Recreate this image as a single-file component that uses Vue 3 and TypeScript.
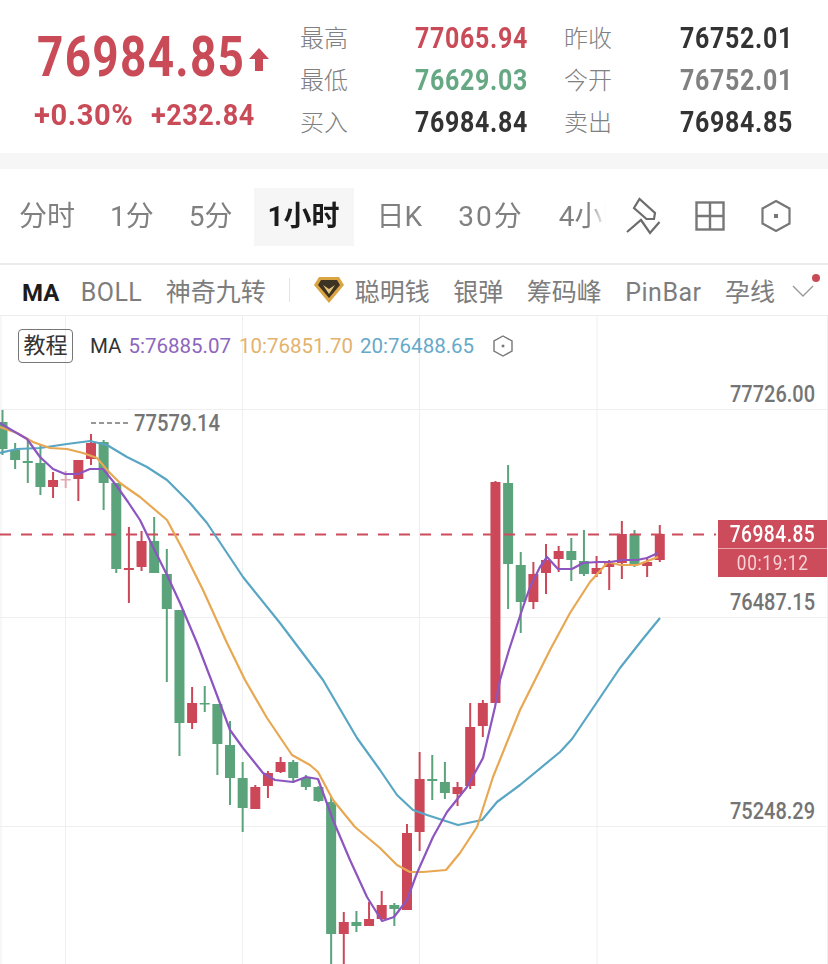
<template>
  <div class="page">
    <header class="quote">
      <div class="quote-main">
        <div class="price-line">
          <span class="price num">76984.85</span>
          <svg class="up-arrow" width="22" height="24" viewBox="0 0 22 24">
            <polygon points="11,1 21,12 15,12 15,24 7,24 7,12 1,12" fill="#c94b58" />
          </svg>
        </div>
        <div class="change-line num">
          <span class="pct">+0.30%</span>
          <span class="amount">+232.84</span>
        </div>
      </div>
      <div class="stats">
        <template v-for="row in stats" :key="row.label">
          <span class="stat-label">{{ row.label }}</span>
          <span class="stat-value num" :class="row.tone">{{ row.value }}</span>
        </template>
      </div>
    </header>

    <div class="band"></div>

    <nav class="periods">
      <div class="period-list">
        <span
          v-for="p in periods"
          :key="p"
          class="period"
          :class="{ active: p === '1小时' }"
        >{{ p }}</span>
      </div>
      <div class="tools">
        <svg width="36" height="38" viewBox="0 0 36 38" fill="none" stroke="#6c6c6c" stroke-width="2.2">
          <path d="M8 11 L13.5 2 L29 16 L28 22 L20.5 22 Z" />
          <path d="M1 35 L15 23 L24 36 L33.5 25" />
        </svg>
        <svg width="30" height="30" viewBox="0 0 30 30" fill="none" stroke="#777" stroke-width="2.4">
          <rect x="1.5" y="1.5" width="27" height="27" />
          <path d="M15 1.5 V28.5 M1.5 15 H28.5" />
        </svg>
        <svg class="tool-hex" width="30" height="34" viewBox="0 0 30 34" fill="none" stroke="#777" stroke-width="2.2">
          <polygon points="15,2 28.5,9.5 28.5,24.5 15,32 1.5,24.5 1.5,9.5" />
          <rect x="13" y="15" width="4" height="4" fill="#777" stroke="none" />
        </svg>
      </div>
    </nav>

    <div class="indicators">
      <span class="ind active">MA</span>
      <span class="ind boll">BOLL</span>
      <span class="ind">神奇九转</span>
      <span class="divider"></span>
      <svg class="gem" width="30" height="26" viewBox="0 0 30 26">
        <polygon points="5,0 25,0 30,8 15,26 0,8" fill="#d9a441" />
        <polygon points="7,3 23,3 26,8 15,21 4,8" fill="#3d3323" />
        <polygon points="9,8 15,12 21,8 15,17" fill="#e8c37a" />
      </svg>
      <span class="ind">聪明钱</span>
      <span class="ind">银弹</span>
      <span class="ind">筹码峰</span>
      <span class="ind pinbar">PinBar</span>
      <span class="ind">孕线</span>
      <span class="more">
        <svg width="22" height="14" viewBox="0 0 22 14" fill="none" stroke="#999" stroke-width="1.4">
          <path d="M1 2 L11 12 L21 2" />
        </svg>
        <i class="dot"></i>
      </span>
    </div>

    <section class="chart">
      <svg class="plot" width="828" height="648" viewBox="0 316 828 648">
        <g stroke="#efefef" stroke-width="1">
          <line v-for="x in gridX" :key="'v' + x" :x1="x" :x2="x" y1="316" y2="964" />
          <line v-for="y in gridY" :key="'h' + y" x1="0" x2="827" :y1="y" :y2="y" />
        </g>

        <g v-for="(c, i) in candles" :key="i" :fill="colors[c[4]]">
          <rect :x="xOf(i) - 1" :y="c[2]" width="2" :height="c[3] - c[2]" />
          <rect :x="xOf(i) - 5" :y="c[0]" width="10" :height="c[1] - c[0]" />
        </g>

        <line x1="0" x2="716" y1="534.5" y2="534.5" stroke="#cd4c5b" stroke-width="2" stroke-dasharray="11 10" />

        <polyline :points="ma20" fill="none" stroke="#58a6c4" stroke-width="2.2" stroke-linejoin="round" />
        <polyline :points="ma10" fill="none" stroke="#e8a853" stroke-width="2.2" stroke-linejoin="round" />
        <polyline :points="ma5" fill="none" stroke="#8d55c0" stroke-width="2.2" stroke-linejoin="round" />

        <line x1="91" x2="129" y1="423" y2="423" stroke="#777" stroke-width="1.6" stroke-dasharray="5 3" />
        <text x="134" y="431" class="axis" textLength="86" lengthAdjust="spacingAndGlyphs">77579.14</text>
        <text x="730" y="402" class="axis" textLength="85" lengthAdjust="spacingAndGlyphs">77726.00</text>
        <text x="730" y="610" class="axis" textLength="85" lengthAdjust="spacingAndGlyphs">76487.15</text>
        <text x="730" y="819" class="axis" textLength="85" lengthAdjust="spacingAndGlyphs">75248.29</text>
      </svg>

      <div class="legend">
        <span class="guide">教程</span>
        <span class="legend-ma">MA</span>
        <span class="m5">5:76885.07</span>
        <span class="m10">10:76851.70</span>
        <span class="m20">20:76488.65</span>
        <svg width="20" height="22" viewBox="0 0 20 22" fill="none" stroke="#777" stroke-width="1.4">
          <polygon points="10,1 19,6 19,16 10,21 1,16 1,6" />
          <rect x="8.7" y="9.7" width="2.6" height="2.6" fill="#777" stroke="none" />
        </svg>
      </div>

      <div class="tag num">
        <div class="tag-row top"><span class="tag-price">76984.85</span></div>
        <div class="tag-row"><span class="tag-time">00:19:12</span></div>
      </div>
    </section>
  </div>
</template>

<script setup lang="ts">
type Tone = 'r' | 'g' | 'p'
// bodyTop, bodyBottom, wickTop, wickBottom, colour
type Candle = [number, number, number, number, Tone]

const stats = [
  { label: '最高', value: '77065.94', tone: 'red' },
  { label: '昨收', value: '76752.01', tone: 'dark' },
  { label: '最低', value: '76629.03', tone: 'green' },
  { label: '今开', value: '76752.01', tone: 'grey' },
  { label: '买入', value: '76984.84', tone: 'dark' },
  { label: '卖出', value: '76984.85', tone: 'dark' }
]

const periods = ['分时', '1分', '5分', '1小时', '日K', '30分', '4小时']

const colors: Record<Tone, string> = { r: '#cc4858', g: '#5aa37b', p: '#e2a9b0' }

const gridX = [1, 65.5, 242.5, 419.5, 597, 827.5]
const gridY = [409.5, 617.5, 826.5]

const candles: Candle[] = [
  [422, 449, 410, 455, 'g'],
  [450, 460, 443, 469, 'g'],
  [461, 463, 439, 483, 'g'],
  [463, 487, 444, 495, 'g'],
  [480, 487, 472, 498, 'r'],
  [479, 480.5, 471, 488, 'p'],
  [460, 479, 460, 501, 'r'],
  [443, 459, 434, 465, 'r'],
  [442, 483, 440, 510, 'g'],
  [483, 569, 483, 573, 'g'],
  [568, 570, 527, 603, 'r'],
  [541, 567, 531, 571, 'r'],
  [541, 573, 517, 573, 'g'],
  [574, 609, 549, 682, 'g'],
  [610, 723, 610, 756, 'g'],
  [703, 723, 687, 729, 'r'],
  [703, 704.5, 686, 712, 'g'],
  [704, 744, 704, 775, 'g'],
  [745, 778, 721, 805, 'g'],
  [778, 808, 762, 832, 'g'],
  [787, 809, 785, 809, 'r'],
  [773, 786, 771, 798, 'r'],
  [762, 772, 757, 773, 'r'],
  [762, 778, 760, 783, 'g'],
  [778, 787, 775, 790, 'g'],
  [787, 801, 786, 802, 'g'],
  [802, 934, 797, 970, 'g'],
  [922, 934, 912, 970, 'r'],
  [922, 926, 911, 932, 'g'],
  [919, 926, 902, 926, 'r'],
  [905, 919, 891, 920, 'r'],
  [905, 909, 903, 926, 'g'],
  [833, 910, 824, 910, 'r'],
  [779, 832, 752, 851, 'r'],
  [779, 781, 755, 800, 'g'],
  [782, 793, 762, 799, 'g'],
  [787, 794, 782, 806, 'r'],
  [727, 786, 703, 789, 'r'],
  [703, 726, 700, 737, 'r'],
  [482, 703, 481, 703, 'r'],
  [483, 564, 465, 609, 'g'],
  [565, 602, 552, 633, 'g'],
  [574, 602, 562, 609, 'r'],
  [560, 573, 544, 594, 'r'],
  [551, 559, 546, 572, 'r'],
  [551, 560, 538, 581, 'g'],
  [561, 574, 530, 576, 'g'],
  [568, 574, 556, 577, 'r'],
  [563, 567, 560, 590, 'r'],
  [534, 563, 521, 579, 'r'],
  [534, 565, 530, 567, 'g'],
  [562, 566, 557, 577, 'r'],
  [534, 560, 525, 562, 'r']
]

function xOf(i: number) {
  return 2.5 + i * 12.64
}

const ma5 =
  '0,423 3,425 27,439 40,457 53,469 65,474 78,474 90,469 103,469 116,485 128,502 140,520 153,547 167,575 180,603 197,643 212,682 230,730 243,748 263,773 275,780 293,782 306,777 318,779 333,820 350,860 367,897 382,921 394,917 407,900 417,873 433,837 447,812 467,787 483,758 495,707 500,680 509,650 522,610 530,587 540,567 547,557 558,569 572,569 583,563 597,562 610,562 623,560 637,560 647,558 658,553'
const ma10 =
  '0,427 17,433 33,442 50,448 67,449 83,453 97,458 107,470 120,483 140,497 167,520 183,550 203,590 227,643 245,680 267,718 292,755 310,765 318,772 333,800 355,827 380,848 397,865 410,872 423,872 446,870 460,853 477,827 493,777 520,710 550,650 570,613 590,582 608,562 620,565 637,565 658,557'
const ma20 =
  '0,453 17,449 40,448 67,444 90,441 107,445 127,457 147,467 167,480 190,503 207,523 223,547 243,577 280,623 323,680 357,738 380,770 397,795 413,810 427,815 458,825 482,820 497,802 520,785 560,752 572,739 593,708 620,668 642,640 660,618'
</script>

<style>
html,
body {
  background: #fff;
}
</style>

<style scoped>
.page {
  width: 828px;
  height: 964px;
  overflow: hidden;
  background: #fff;
  display: flex;
  flex-direction: column;
  font-family: Roboto, "Noto Sans CJK SC", sans-serif;
}

.num {
  font-family: Roboto, sans-serif;
}

.quote {
  height: 153px;
  flex: none;
  display: flex;
  box-sizing: border-box;
  padding: 17px 0 0 34px;
}

.quote-main {
  width: 266px;
  flex: none;
}

.price-line {
  display: flex;
  align-items: center;
  height: 80px;
  padding-left: 3px;
}

.price {
  flex: none;
  width: 205px;
  font-size: 56px;
  font-weight: 700;
  letter-spacing: 1.6px;
  color: #c94b58;
  line-height: 80px;
  white-space: nowrap;
  transform: scaleX(0.82);
  transform-origin: left center;
}

.up-arrow {
  margin-left: 6px;
  margin-top: 4px;
}

.change-line {
  display: flex;
  gap: 18px;
  font-size: 30px;
  font-weight: 700;
  color: #c94b58;
  letter-spacing: 0.6px;
  line-height: 38px;
  margin-top: -1px;
}

.pct {
  width: 99px;
  white-space: nowrap;
  transform: scaleX(0.97);
  transform-origin: left center;
}

.amount {
  transform: scaleX(0.9);
  transform-origin: left center;
}

.stats {
  display: grid;
  grid-template-columns: 115px 149px 116px auto;
  grid-auto-rows: 42px;
  align-items: center;
}

.stat-label {
  font-size: 24px;
  color: #808080;
  font-family: "Noto Sans CJK SC", sans-serif;
  font-weight: 300;
  margin-top: -4px;
}

.stat-value {
  font-size: 29px;
  font-weight: 700;
  letter-spacing: 0.8px;
  white-space: nowrap;
  transform: scaleX(0.86);
  transform-origin: left center;
}

.red {
  color: #c94b58;
}

.green {
  color: #66a883;
}

.dark {
  color: #333;
}

.grey {
  color: #808080;
}

.band {
  height: 16px;
  flex: none;
  background: #f6f6f6;
}

.periods {
  height: 94px;
  flex: none;
  display: flex;
  align-items: center;
  border-bottom: 2px solid #ececec;
}

.period-list {
  width: 607px;
  flex: none;
  display: flex;
  gap: 7px;
  padding: 2px 0 0 5px;
  box-sizing: border-box;
  overflow: hidden;
  white-space: nowrap;
  -webkit-mask-image: linear-gradient(to right, #000 588px, transparent 606px);
  mask-image: linear-gradient(to right, #000 588px, transparent 606px);
}

.period {
  flex: none;
  height: 58px;
  line-height: 58px;
  padding: 0 14px;
  font-size: 28px;
  color: #808080;
}

.period:nth-child(5) {
  margin-left: 2px;
}

.period:nth-child(6) {
  margin-left: 1px;
  letter-spacing: 2px;
}

.period.active {
  background: #f6f6f6;
  color: #1c1c1c;
  font-weight: 700;
}

.tools {
  display: flex;
  align-items: center;
  gap: 33px;
  padding-left: 19px;
}

.tool-hex {
  margin-left: 3px;
}

.indicators {
  height: 51px;
  flex: none;
  display: flex;
  align-items: center;
  gap: 23.5px;
  padding-left: 22px;
  box-sizing: border-box;
  border-bottom: 1px solid #ececec;
  white-space: nowrap;
}

.ind {
  font-size: 25px;
  line-height: 30px;
  color: #7d7d7d;
  flex: none;
  margin-top: 5px;
}

.ind.active {
  color: #1c1c1c;
  font-weight: 700;
  font-size: 24px;
}

.boll {
  margin-left: -2px;
  letter-spacing: 0.4px;
}

.pinbar {
  letter-spacing: 0.5px;
}

.divider {
  width: 1px;
  height: 24px;
  background: #e4e4e4;
}

.gem {
  flex: none;
  margin-right: -12.5px;
}

.more {
  position: relative;
  display: flex;
  margin-left: -7px;
  margin-top: 2px;
}

.dot {
  position: absolute;
  right: -6px;
  top: -10px;
  width: 8px;
  height: 8px;
  border-radius: 50%;
  background: #c94b58;
}

.chart {
  position: relative;
  flex: 1;
}

.plot {
  position: absolute;
  left: 0;
  top: 0;
  display: block;
}

.axis {
  font-family: Roboto, sans-serif;
  font-size: 23px;
  font-weight: 500;
  fill: #747474;
}

.legend {
  position: relative;
  display: flex;
  align-items: center;
  height: 60px;
  padding-left: 18px;
  font-size: 20.5px;
  white-space: nowrap;
}

.guide {
  width: 55px;
  height: 34px;
  line-height: 32px;
  box-sizing: border-box;
  text-align: center;
  border: 1px solid #777;
  border-radius: 4px;
  color: #333;
  font-size: 22px;
  margin-right: 17px;
}

.legend-ma {
  color: #333;
  margin-right: 7px;
}

.m5 {
  color: #8d66bd;
  margin-right: 8px;
}

.m10 {
  color: #e3b26d;
  margin-right: 7px;
}

.m20 {
  color: #66a9c9;
  margin-right: 19px;
}

.tag {
  position: absolute;
  left: 718px;
  top: 204px;
  width: 109px;
  height: 57px;
  background: #cd4c5b;
  color: #fff;
}

.tag-row {
  height: 28px;
  line-height: 28px;
  text-align: center;
}

.tag-row.top {
  height: 29px;
  border-bottom: 1px solid #e7a6ae;
  box-sizing: border-box;
}

.tag-price {
  display: inline-block;
  font-size: 24px;
  font-weight: 500;
  letter-spacing: 0.6px;
  transform: scaleX(0.8);
}

.tag-time {
  display: inline-block;
  font-size: 21px;
  letter-spacing: 0.8px;
  color: #f5d3d7;
  transform: scaleX(0.82);
}
</style>
